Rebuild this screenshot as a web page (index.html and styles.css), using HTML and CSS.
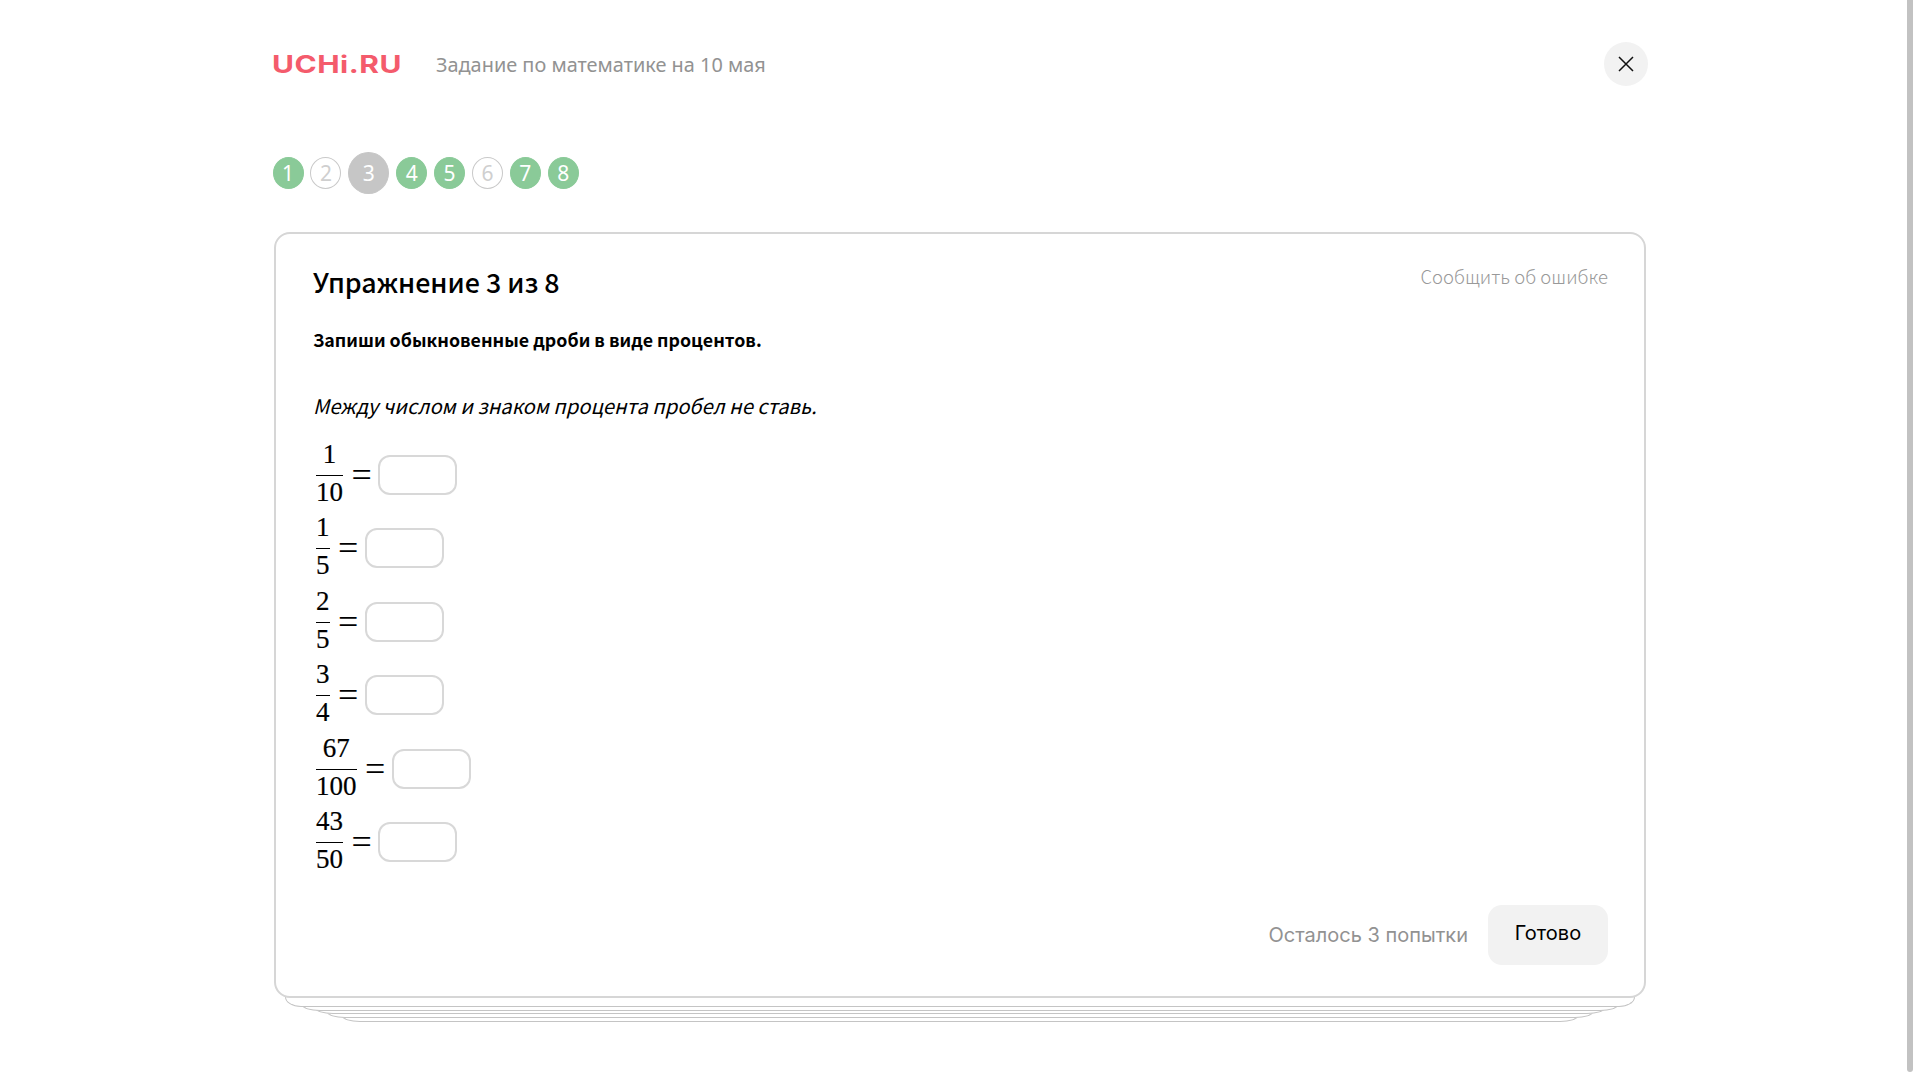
FILE: index.html
```html
<!DOCTYPE html>
<html lang="ru">
<head>
    <meta charset="UTF-8">
    <title>Задание по математике на 10 мая</title>
    <link rel="stylesheet" href="styles.css">
</head>
<body>
    <div class="page">
        <header class="top">
            <div class="logo">UCHi.RU</div>
            <div class="top-title">Задание по математике на 10 мая</div>
            <button class="close">
                <svg width="16" height="16" viewBox="0 0 16 16"><path d="M1 1L15 15M15 1L1 15" stroke="#111" stroke-width="1.5" fill="none"/></svg>
            </button>
        </header>

        <nav class="steps">
            <span class="step done">1</span>
            <span class="step">2</span>
            <span class="step current">3</span>
            <span class="step done">4</span>
            <span class="step done">5</span>
            <span class="step">6</span>
            <span class="step done">7</span>
            <span class="step done">8</span>
        </nav>

        <main class="card">
            <div class="card-head">
                <h1>Упражнение 3 из 8</h1>
                <a class="report">Сообщить об ошибке</a>
            </div>
            <p class="task">Запиши обыкновенные дроби в виде процентов.</p>
            <p class="hint">Между числом и знаком процента пробел не ставь.</p>

            <div class="rows">
                <div class="row">
                    <span class="frac"><span class="num">1</span><span class="den">10</span></span>
                    <span class="eq">=</span>
                    <input class="answer" type="text">
                </div>
                <div class="row">
                    <span class="frac"><span class="num">1</span><span class="den">5</span></span>
                    <span class="eq">=</span>
                    <input class="answer" type="text">
                </div>
                <div class="row">
                    <span class="frac"><span class="num">2</span><span class="den">5</span></span>
                    <span class="eq">=</span>
                    <input class="answer" type="text">
                </div>
                <div class="row">
                    <span class="frac"><span class="num">3</span><span class="den">4</span></span>
                    <span class="eq">=</span>
                    <input class="answer" type="text">
                </div>
                <div class="row">
                    <span class="frac"><span class="num">67</span><span class="den">100</span></span>
                    <span class="eq">=</span>
                    <input class="answer" type="text">
                </div>
                <div class="row">
                    <span class="frac"><span class="num">43</span><span class="den">50</span></span>
                    <span class="eq">=</span>
                    <input class="answer" type="text">
                </div>
            </div>

            <div class="card-foot">
                <span class="tries">Осталось 3 попытки</span>
                <button class="done-btn">Готово</button>
            </div>
        </main>

        <div class="sheet sheet-1"></div>
        <div class="sheet sheet-2"></div>
        <div class="sheet sheet-3"></div>
        <div class="sheet sheet-4"></div>
        <div class="sheet sheet-5"></div>
    </div>
    <div class="scrollbar"></div>
</body>
</html>
```

FILE: styles.css
```css
html, body {
    height: 100%;
}
body {
    margin: 0;
    background-color: #ffffff;
    font-family: "Noto Sans", sans-serif;
    color: #000000;
    overflow: hidden;
}
.page {
    width: 1372px;
    margin-left: 274px;
}
.top {
    height: 128px;
    display: flex;
    align-items: center;
}
.logo {
    width: 162px;
    margin-left: -2px;
    font-family: "Inter", sans-serif;
    font-size: 24px;
    font-weight: 700;
    letter-spacing: 0.4px;
    color: #f45b6c;
    transform: scaleX(1.25);
    transform-origin: left center;
}
.top-title {
    margin-left: 2px;
    font-size: 19.9px;
    color: #929292;
    flex: 1;
}
.close {
    width: 44px;
    height: 44px;
    margin-right: -2px;
    border: none;
    border-radius: 50%;
    background-color: #f2f2f2;
    display: flex;
    align-items: center;
    justify-content: center;
    padding: 0;
}
.steps {
    box-sizing: border-box;
    height: 104px;
    margin-left: -1.5px;
    padding-bottom: 14px;
    display: flex;
    align-items: center;
    gap: 6.9px;
}
.step {
    box-sizing: border-box;
    width: 31px;
    height: 32px;
    border: 1px solid #c9c9c9;
    border-radius: 50%;
    display: flex;
    align-items: center;
    justify-content: center;
    font-size: 21px;
    color: #cfcfcf;
    background-color: #ffffff;
}
.step.done {
    background-color: #8aca98;
    border-color: #8aca98;
    color: #ffffff;
}
.step.current {
    width: 41px;
    height: 42px;
    border-color: #c6c6c6;
    background-color: #c6c6c6;
    color: #ffffff;
}
.card {
    box-sizing: border-box;
    height: 766px;
    padding: 28px 36px 31px 37px;
    border: 2px solid #d6d6d6;
    border-radius: 16px;
    background-color: #ffffff;
    position: relative;
    z-index: 6;
    display: flex;
    flex-direction: column;
}
.card-head {
    display: flex;
    justify-content: space-between;
}
h1, .task, .hint, .report {
    font-family: "Noto Sans CJK SC", "Noto Sans", sans-serif;
}
h1 {
    margin: 0;
    font-size: 26.8px;
    font-weight: 500;
    line-height: 40px;
}
.report {
    font-size: 18.5px;
    line-height: 28px;
    font-weight: 300;
    color: #999999;
}
.task {
    margin: 23px 0 0 0;
    font-size: 17.8px;
    line-height: 28px;
    font-weight: 700;
}
.hint {
    margin: 39px 0 0 0;
    font-size: 20.1px;
    line-height: 28px;
    font-style: italic;
}
.rows {
    margin-top: 18px;
    margin-left: 3px;
    display: flex;
    flex-direction: column;
}
.row {
    height: 73.5px;
    display: flex;
    align-items: center;
}
.frac {
    display: inline-flex;
    flex-direction: column;
    align-items: center;
    font-family: "Liberation Serif", serif;
    font-size: 27px;
    -webkit-text-stroke: 0.2px #000000;
}
.num {
    line-height: 37px;
    padding-bottom: 2px;
}
.den {
    align-self: stretch;
    text-align: center;
    border-top: 1px solid #000000;
    line-height: 33px;
    padding-bottom: 5px;
}
.eq {
    margin-left: 8.5px;
    font-family: "Liberation Serif", serif;
    font-size: 36px;
    line-height: 36px;
}
.answer {
    box-sizing: border-box;
    width: 79px;
    height: 40px;
    margin-left: 6.4px;
    border: 2px solid #d8d8d8;
    border-radius: 12px;
    background-color: #ffffff;
}
.card-foot {
    margin-top: auto;
    display: flex;
    align-items: center;
    justify-content: flex-end;
    gap: 20px;
}
.tries {
    font-family: "Inter", sans-serif;
    font-size: 20px;
    color: #929292;
}
.done-btn {
    width: 120px;
    height: 60px;
    border: none;
    border-radius: 14px;
    background-color: #f2f2f2;
    font-family: "Inter", sans-serif;
    font-size: 20px;
    color: #000000;
    padding: 0 0 4px 0;
}
.sheet {
    box-sizing: border-box;
    height: 20px;
    margin-top: -16px;
    border: 1px solid #c4c4c4;
    border-top: none;
    background-color: #ffffff;
    position: relative;
}
.sheet-1 {
    margin: -11px 11px 0 11px;
    border-radius: 0 0 16px 16px / 0 0 10px 10px;
    z-index: 5;
}
.sheet-2 {
    margin-left: 28px;
    margin-right: 28px;
    border-radius: 0 0 18px 18px / 0 0 6px 6px;
    z-index: 4;
}
.sheet-3 {
    margin-left: 41px;
    margin-right: 41px;
    margin-top: -17px;
    border-radius: 0 0 18px 18px / 0 0 6px 6px;
    z-index: 3;
}
.sheet-4 {
    margin-left: 53px;
    margin-right: 53px;
    border-radius: 0 0 18px 18px / 0 0 6px 6px;
    z-index: 2;
}
.sheet-5 {
    margin-left: 68px;
    margin-right: 68px;
    border-radius: 0 0 18px 18px / 0 0 6px 6px;
    z-index: 1;
}
.scrollbar {
    position: absolute;
    top: 0;
    left: 1907px;
    width: 6px;
    height: 1072px;
    background-color: #c2c2c2;
    border-radius: 0 0 3px 3px;
}
```
